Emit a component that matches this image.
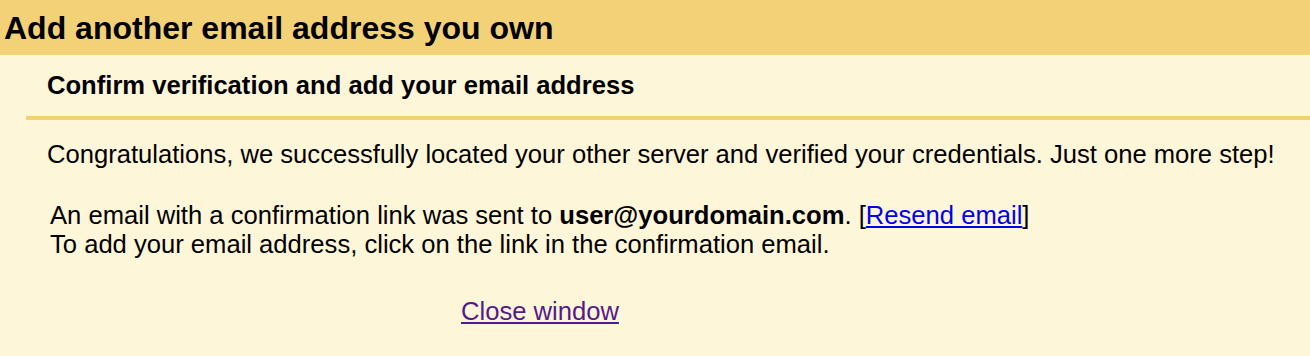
import React from "react";

export default function App() {
  return (
    <div className="w-[1310px] h-[356px] bg-[#fef6d9] text-black" style={{ fontFamily: '"Liberation Sans", Arial, sans-serif' }}>
      <div className="h-[55px] bg-[#f3d277] pl-[4px] pt-[10px]">
        <h1 className="text-[32px] font-bold leading-[36px]">Add another email address you own</h1>
      </div>
      <div className="pl-[26px]">
        <div className="pl-[21px] pt-[16px] pb-[16px]">
          <h2 className="text-[25.6px] font-bold leading-[28.5px]">Confirm verification and add your email address</h2>
        </div>
        <div className="h-[4px] bg-[#f3d277]" />
      </div>
      <div className="pl-[47px] pt-[20px] text-[25.6px] leading-[28.5px]">
        <p>Congratulations, we successfully located your other server and verified your credentials. Just one more step!</p>
        <div className="pl-[3px] pt-[33px]">
          <p>
            An email with a confirmation link was sent to <b>user@yourdomain.com</b>. [
            <a href="#" className="text-[#0000ee] underline">Resend email</a>]
          </p>
          <p>To add your email address, click on the link in the confirmation email.</p>
        </div>
        <div className="pl-[414px] pt-[39px]">
          <a href="#" className="text-[#551a8b] underline">Close window</a>
        </div>
      </div>
    </div>
  );
}
